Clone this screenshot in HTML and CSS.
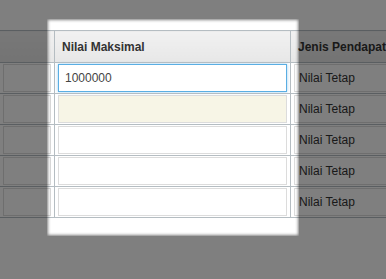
FILE: index.html
```html
<!DOCTYPE html>
<html lang="id">
<head>
  <meta charset="UTF-8">
  <title>Komponen Pendapatan</title>
  <meta name="viewport" content="width=device-width, initial-scale=1.0">
  <link rel="stylesheet" href="styles.css">
</head>
<body>
  <table class="grid">
    <colgroup>
      <col class="col-min">
      <col class="col-max">
      <col class="col-type">
    </colgroup>
    <thead>
      <tr>
        <th></th>
        <th>Nilai Maksimal</th>
        <th>Jenis Pendapatan</th>
      </tr>
    </thead>
    <tbody>
      <tr>
        <td><input class="field" type="text" value=""></td>
        <td><input class="field focused" type="text" value="1000000"></td>
        <td><input class="field plain" type="text" value="Nilai Tetap" readonly></td>
      </tr>
      <tr>
        <td><input class="field" type="text" value=""></td>
        <td><input class="field readonly" type="text" value="" readonly></td>
        <td><input class="field plain" type="text" value="Nilai Tetap" readonly></td>
      </tr>
      <tr>
        <td><input class="field" type="text" value=""></td>
        <td><input class="field" type="text" value=""></td>
        <td><input class="field plain" type="text" value="Nilai Tetap" readonly></td>
      </tr>
      <tr>
        <td><input class="field" type="text" value=""></td>
        <td><input class="field" type="text" value=""></td>
        <td><input class="field plain" type="text" value="Nilai Tetap" readonly></td>
      </tr>
      <tr>
        <td><input class="field" type="text" value=""></td>
        <td><input class="field" type="text" value=""></td>
        <td><input class="field plain" type="text" value="Nilai Tetap" readonly></td>
      </tr>
    </tbody>
  </table>

  <div class="tour-highlight"></div>
</body>
</html>
```

FILE: styles.css
```css
body {
  margin: 0;
  padding: 0;
  background-color: #fff;
  font-family: 'Liberation Sans', Arial, sans-serif;
  font-size: 12px;
  color: #333;
  overflow: hidden;
}

.grid {
  margin-top: 30px;
  margin-left: -1px;
  border-collapse: collapse;
  table-layout: fixed;
  width: 500px;
}

.col-min {
  width: 55px;
}

.col-max {
  width: 236px;
}

.col-type {
  width: 209px;
}

.grid th,
.grid td {
  border: 1px solid #b5bdc2;
}

.grid th {
  height: 31px;
  padding: 0 7px;
  text-align: left;
  font-weight: bold;
  color: #333;
  background: linear-gradient(#f1f1f1, #e7e7e7);
  white-space: nowrap;
  overflow: hidden;
}

.grid td {
  padding: 1px 3px;
}

.field {
  display: block;
  box-sizing: border-box;
  width: 100%;
  height: 28px;
  margin: 0;
  padding: 0 6px;
  border: 1px solid #dcdcdc;
  background-color: #fff;
  font-family: 'Liberation Sans', Arial, sans-serif;
  font-size: 12px;
  color: #333;
  outline: none;
}

.field.focused {
  border-color: #5aaee3;
  box-shadow: 0 0 3px rgba(90, 174, 227, 0.6);
  color: #444;
}

.field.readonly {
  background-color: #f7f5e6;
}

.field.plain {
  padding: 0 4px;
}

.tour-highlight {
  position: absolute;
  left: 47px;
  top: 19px;
  width: 252px;
  height: 217px;
  box-shadow: inset 0 0 3px 1px rgba(0, 0, 0, 0.5), 0 0 0 5000px rgba(0, 0, 0, 0.5);
  pointer-events: none;
}
```
